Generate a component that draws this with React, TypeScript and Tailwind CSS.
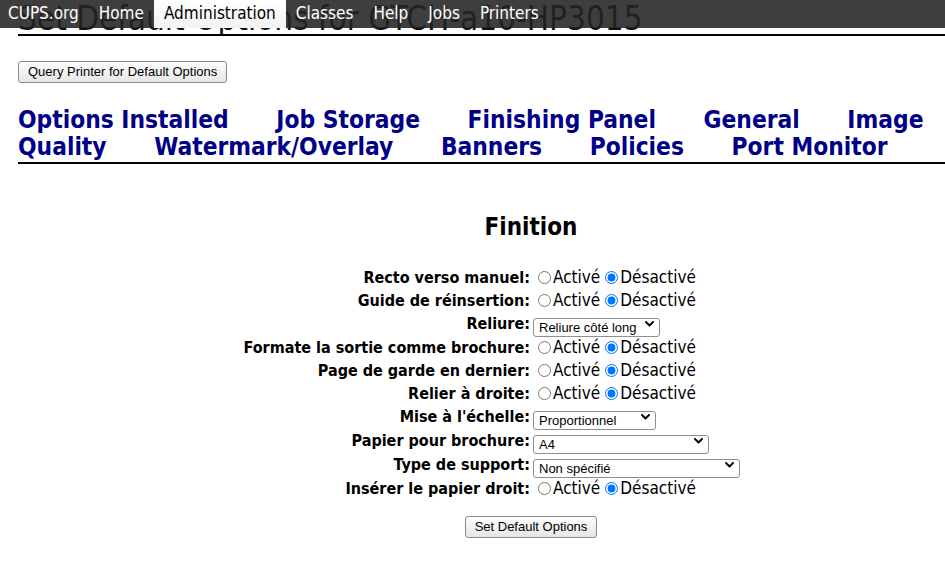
import React from 'react';

const navItems = ['CUPS.org', 'Home', 'Administration', 'Classes', 'Help', 'Jobs', 'Printers'];

const tabs = [
  'Options Installed',
  'Job Storage',
  'Finishing Panel',
  'General',
  'Image Quality',
  'Watermark/Overlay',
  'Banners',
  'Policies',
  'Port Monitor',
];

type Row =
  | { label: string; kind: 'radio' }
  | { label: string; kind: 'select'; value: string; width: string };

const rows: Row[] = [
  { label: 'Recto verso manuel:', kind: 'radio' },
  { label: 'Guide de réinsertion:', kind: 'radio' },
  { label: 'Reliure:', kind: 'select', value: 'Reliure côté long', width: 'w-[127px]' },
  { label: 'Formate la sortie comme brochure:', kind: 'radio' },
  { label: 'Page de garde en dernier:', kind: 'radio' },
  { label: 'Relier à droite:', kind: 'radio' },
  { label: "Mise à l'échelle:", kind: 'select', value: 'Proportionnel', width: 'w-[123px]' },
  { label: 'Papier pour brochure:', kind: 'select', value: 'A4', width: 'w-[176px]' },
  { label: 'Type de support:', kind: 'select', value: 'Non spécifié', width: 'w-[207px]' },
  { label: 'Insérer le papier droit:', kind: 'radio' },
];

const sans = 'font-["DejaVu_Sans_Condensed","DejaVu_Sans",sans-serif] font-stretch-condensed';
const ui = 'font-["Liberation_Sans",Arial,sans-serif]';

function FakeSelect({ value, width }: { value: string; width: string }) {
  return (
    <div className={`relative h-[19px] ${width}`}>
      <select
        defaultValue={value}
        className={`appearance-none w-full h-full bg-white border border-[#8f8f8f] rounded-[3px] pl-[5px] text-[13px] leading-[17px] text-black ${ui}`}
      >
        <option>{value}</option>
      </select>
      {/* dropdown chevron */}
      <svg
        className="absolute right-[6px] top-[6px] pointer-events-none"
        width="9"
        height="6"
        viewBox="0 0 9 6"
        fill="none"
      >
        <path d="M1 1l3.5 3.5L8 1" stroke="#000" strokeWidth="1.9" strokeLinecap="round" strokeLinejoin="round" />
      </svg>
    </div>
  );
}

function RadioPair({ name }: { name: string }) {
  return (
    <div className="flex items-center text-[17px]">
      <input type="radio" name={name} className="w-[13px] h-[13px] ml-[5px] mr-[2px]" />
      <span>Activé</span>
      <input type="radio" name={name} defaultChecked className="w-[13px] h-[13px] ml-[5px] mr-[2px]" />
      <span>Désactivé</span>
    </div>
  );
}

function Button({ children }: { children: React.ReactNode }) {
  return (
    <button
      className={`h-[22px] px-[9px] border border-[#8a8a8a] rounded-[3px] bg-linear-to-b from-[#fdfdfd] to-[#e6e6e6] text-[13px] leading-[20px] text-black ${ui}`}
    >
      {children}
    </button>
  );
}

export default function App() {
  return (
    <div className={`relative min-h-[570px] bg-white text-black ${sans}`}>
      {/* Page content */}
      <div className="pl-[18px]">
        <h1 className="pt-[4px] leading-[30px] text-[33px] font-normal text-[#111] border-b-2 border-black whitespace-nowrap overflow-hidden">
          Set Default Options for GTCH-a10-HP3015
        </h1>

        <div className="mt-[23px]">
          <Button>Query Printer for Default Options</Button>
        </div>

        <div className="mt-[23px] pb-[2px] border-b-2 border-black text-[24.3px] leading-[27px] font-bold text-[#000088]">
          {tabs.map((t) => (
            <React.Fragment key={t}>
              <a href="#" className="mr-[40px]">
                {t}
              </a>{' '}
            </React.Fragment>
          ))}
        </div>

        <div className="ml-[99px]">
          <h2 className="mt-[49px] text-center text-[24px] leading-[28px] font-bold">Finition</h2>

          <div className="mt-[25px] grid grid-cols-[413px_1fr] gap-x-[3px] text-[16px]">
            {rows.map((r, i) => (
              <React.Fragment key={r.label}>
                <div
                  className={`flex items-center justify-end font-bold whitespace-nowrap ${
                    r.kind === 'select' ? 'h-[24px]' : 'h-[23px]'
                  }`}
                >
                  {r.label}
                </div>
                <div className={`flex items-center ${r.kind === 'select' ? 'h-[24px]' : 'h-[23px]'}`}>
                  {r.kind === 'radio' ? (
                    <RadioPair name={`opt-${i}`} />
                  ) : (
                    <FakeSelect value={r.value} width={r.width} />
                  )}
                </div>
              </React.Fragment>
            ))}
          </div>

          <div className="mt-[16px] flex justify-center">
            <Button>Set Default Options</Button>
          </div>
        </div>
      </div>

      {/* Translucent top navigation bar */}
      <nav className={`absolute top-0 left-0 right-0 h-[28px] flex bg-[rgba(35,35,35,0.88)] text-[17px] ${sans}`}>
        {navItems.map((n, i) => (
          <a
            key={n}
            href="#"
            className={`h-full flex items-center ${i === 0 ? 'pl-[8px] pr-[10px]' : 'px-[10px]'} ${
              n === 'Administration' ? 'bg-linear-to-b from-white to-[#f2f2f2] text-black' : 'text-white'
            }`}
          >
            {n}
          </a>
        ))}
      </nav>
    </div>
  );
}
